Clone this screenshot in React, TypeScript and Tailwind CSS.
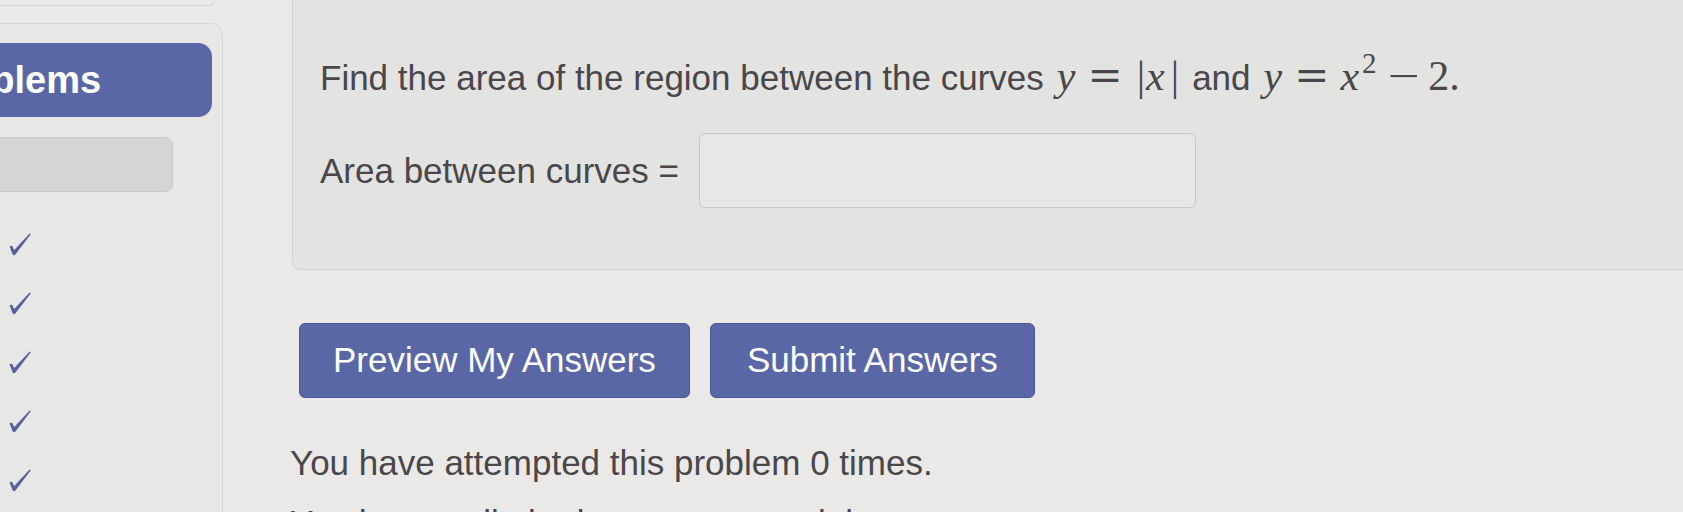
import React from "react";

// calligraphic tick used in the problem list
function Check() {
  return (
    <svg width="22" height="23" viewBox="0 0 22 23" className="block">
      <path
        d="M0.6 13.6 C1.6 12.4 3.2 12.7 4 14.4 L5.2 16.9 L20.6 0.4 L21.8 1.3 L6.4 21.6 C5.5 22.6 4.1 22.5 3.6 21.3 Z"
        fill="#56609e"
      />
    </svg>
  );
}

function Sidebar() {
  return (
    <div className="w-[223px] shrink-0">
      <div className="h-[6px] w-[215px] rounded-br-md border-b border-r border-[#d4d4d2]" />
      <div className="-ml-[80px] mt-[17px] h-[520px] w-[303px] rounded-xl border border-[#d6d6d4] bg-[#e7e7e5] pl-[12px] pt-[19px]">
        <div className="flex h-[74px] w-[279px] items-center rounded-[14px] bg-[#5a67a7] text-[38px] font-bold text-white">
          <span className="-ml-[5px]">Problems</span>
        </div>
        <div className="mt-[20px] h-[55px] w-[240px] rounded-lg border border-[#c7c7c5] bg-[#d5d5d3]" />
        <ul className="ml-[76px] mt-[41px] flex flex-col gap-[36px]">
          {[0, 1, 2, 3, 4].map((i) => (
            <li key={i}>
              <Check />
            </li>
          ))}
        </ul>
      </div>
    </div>
  );
}

const serif = "font-['Liberation_Serif',serif] text-[42px]";
const op = "font-['DejaVu_Serif',serif] text-[42px]";

export default function App() {
  return (
    <div className="flex h-[512px] w-[1683px] overflow-hidden bg-[#eae9e7] font-['Liberation_Sans',Arial,sans-serif] text-[35px] text-[#4a474b]">
      <Sidebar />
      <main className="ml-[69px] min-w-0 flex-1">
        <div className="rounded-bl-lg border-b border-l border-[#d3d3d1] bg-[#e3e3e1] pb-[61px] pl-[27px] pt-[55px]">
          <p className="h-[42px] whitespace-nowrap leading-[42px]">
            Find the area of the region between the curves
            <span className={`${serif} ml-[13px] italic`}>y</span>
            <span className={`${op} ml-[12px]`}>=</span>
            <span className={`${serif} ml-[14px]`}>|</span>
            <span className={`${serif} ml-[1px] italic`}>x</span>
            <span className={`${serif} ml-[6px]`}>|</span>
            <span className="ml-[13px]">and</span>
            <span className={`${serif} ml-[13px] italic`}>y</span>
            <span className={`${op} ml-[12px]`}>=</span>
            <span className={`${serif} ml-[11px] italic`}>x</span>
            <span className="relative -top-[17px] ml-[3px] font-['Liberation_Serif',serif] text-[29px]">2</span>
            <span className={`${serif} ml-[15px] inline-block scale-x-[1.35]`}>−</span>
            <span className={`${serif} ml-[13px]`}>2.</span>
          </p>
          <div className="mt-[36px] flex items-center">
            <span className="leading-[42px]">Area between curves =</span>
            <input
              type="text"
              aria-label="Area between curves"
              className="ml-[20px] h-[75px] w-[497px] rounded-md border border-[#c9c9c7] bg-[#e7e7e5] outline-none"
            />
          </div>
        </div>

        <div className="ml-[7px] mt-[53px] flex gap-[20px]">
          <button className="h-[75px] rounded-md border border-[#4b5894] bg-[#5a67a7] px-[33px] text-[35px] text-white">
            Preview My Answers
          </button>
          <button className="h-[75px] rounded-md border border-[#4b5894] bg-[#5a67a7] px-[36px] text-[35px] text-white">
            Submit Answers
          </button>
        </div>

        <div className="-ml-[2px] mt-[38px] leading-[53px]">
          <p>You have attempted this problem 0 times.</p>
          <p className="mt-[7px]">You have unlimited attempts remaining.</p>
        </div>
      </main>
    </div>
  );
}
